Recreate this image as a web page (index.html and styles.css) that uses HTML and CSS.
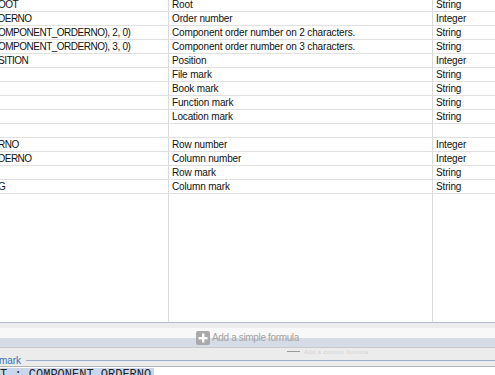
FILE: index.html
```html
<!DOCTYPE html>
<html>
<head>
<meta charset="utf-8">
<link rel="stylesheet" href="styles.css">
</head>
<body>
<div class="page">
  <div class="grid">
    <div class="row"><div class="c1">OOT</div><div class="c2">Root</div><div class="c3">String</div></div>
    <div class="row"><div class="c1">DERNO</div><div class="c2">Order number</div><div class="c3">Integer</div></div>
    <div class="row"><div class="c1">OMPONENT_ORDERNO), 2, 0)</div><div class="c2">Component order number on 2 characters.</div><div class="c3">String</div></div>
    <div class="row"><div class="c1">OMPONENT_ORDERNO), 3, 0)</div><div class="c2">Component order number on 3 characters.</div><div class="c3">String</div></div>
    <div class="row"><div class="c1">SITION</div><div class="c2">Position</div><div class="c3">Integer</div></div>
    <div class="row"><div class="c1"></div><div class="c2">File mark</div><div class="c3">String</div></div>
    <div class="row"><div class="c1"></div><div class="c2">Book mark</div><div class="c3">String</div></div>
    <div class="row"><div class="c1"></div><div class="c2">Function mark</div><div class="c3">String</div></div>
    <div class="row"><div class="c1"></div><div class="c2">Location mark</div><div class="c3">String</div></div>
    <div class="row"><div class="c1"></div><div class="c2"></div><div class="c3"></div></div>
    <div class="row"><div class="c1">RNO</div><div class="c2">Row number</div><div class="c3">Integer</div></div>
    <div class="row"><div class="c1">DERNO</div><div class="c2">Column number</div><div class="c3">Integer</div></div>
    <div class="row"><div class="c1"></div><div class="c2">Row mark</div><div class="c3">String</div></div>
    <div class="row"><div class="c1">G</div><div class="c2">Column mark</div><div class="c3">String</div></div>
    <div class="row fill"><div class="c1"></div><div class="c2"></div><div class="c3"></div></div>
  </div>
  <div class="footer">
    <div class="strip"></div>
    <div class="formula-bar">
      <span class="add-icon"><svg width="14" height="14" viewBox="0 0 14 14"><rect x="0" y="0" width="14" height="14" rx="2" fill="#a9a9a9"/><rect x="6" y="2.5" width="2.4" height="9" fill="#fff"/><rect x="2.5" y="6" width="9" height="2.4" fill="#fff"/></svg></span>
      <span class="add-text">Add a simple formula</span>
    </div>
    <div class="panel">
      <div class="ghost"><span class="ghost-bar"></span><span class="ghost-text">Add a custom formula</span></div>
      <div class="legend"><span class="legend-text">mark</span><span class="legend-line"></span></div>
    </div>
    <div class="editor"><span class="sel">T : COMPONENT_ORDERNO</span></div>
  </div>
</div>
</body>
</html>
```
FILE: styles.css
```css
html, body {
  margin: 0;
  padding: 0;
  background: #ffffff;
}
.page {
  width: 495px;
  height: 375px;
  overflow: hidden;
  display: flex;
  flex-direction: column;
  font-family: "Liberation Sans", Arial, sans-serif;
  font-size: 10px;
  color: #111;
}
.grid {
  margin-top: -2px;
  height: 324px;
  display: flex;
  flex-direction: column;
  background: #fff;
  flex: none;
}
.row {
  display: flex;
  height: 14px;
  flex: none;
  box-sizing: border-box;
  border-bottom: 1px solid #e0e0e0;
}
.row.fill {
  flex: 1;
  border-bottom: none;
}
.c1, .c2, .c3 {
  box-sizing: border-box;
  line-height: 14px;
  white-space: nowrap;
  overflow: hidden;
  letter-spacing: -0.15px;
}
.c1 {
  width: 169px;
  border-right: 1px solid #dadada;
  text-indent: -2px;
  letter-spacing: -0.5px;
  word-spacing: 0.5px;
}
.c2 {
  width: 264px;
  border-right: 1px solid #dadada;
  padding-left: 3px;
}
.c3 {
  flex: 1;
  padding-left: 3px;
}
.footer {
  flex: 1;
  display: flex;
  flex-direction: column;
}
.strip {
  height: 5px;
  border-top: 1px solid #b3bccb;
  background: #ececec;
}
.formula-bar {
  height: 19px;
  display: flex;
  align-items: center;
  padding-left: 196px;
  background: linear-gradient(to bottom, #f8f8f8 0, #f8f8f8 10px, #d6dce6 10px, #d6dce6 19px);
  border-bottom: 1px solid #c9c9c9;
}
.add-icon {
  display: flex;
  width: 14px;
  height: 14px;
}
.add-text {
  margin-left: 2px;
  color: #a3a3a3;
  letter-spacing: -0.35px;
}
.panel {
  height: 18px;
  background: #ececec;
  display: flex;
  flex-direction: column;
  border-bottom: 1px solid #b4b4b4;
}
.ghost {
  height: 7px;
  display: flex;
  align-items: center;
  padding-left: 287px;
  gap: 4px;
}
.ghost-bar {
  width: 13px;
  height: 1px;
  background: #9a9a9a;
}
.ghost-text {
  font-size: 6px;
  color: #d2d2d2;
  letter-spacing: 0.3px;
}
.legend {
  height: 11px;
  display: flex;
  align-items: center;
}
.legend-text {
  color: #3a6fb6;
  font-size: 10px;
  margin-left: -1px;
  letter-spacing: -0.1px;
}
.legend-line {
  flex: 1;
  height: 1px;
  background: #98aecb;
  margin-left: 5px;
}
.editor {
  flex: 1;
  background: #fff;
  font-family: "Liberation Mono", "Courier New", monospace;
  font-size: 12px;
  line-height: 14px;
  color: #222;
  padding-top: 1px;
  overflow: hidden;
}
.sel {
  background: #cad6ea;
  padding-right: 3px;
}
```
